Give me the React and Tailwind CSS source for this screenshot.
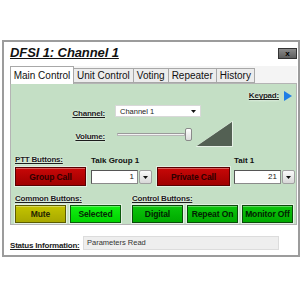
import React from 'react';

const font = { fontFamily: '"Liberation Sans", Arial, sans-serif' };

function Label({ children, className = '' }) {
  return (
    <span
      className={`text-[8px] leading-[8px] font-bold underline text-[#1c1c1c] tracking-[-0.2px] [text-shadow:0_0_2px_#ffffff] ${className}`}
    >
      {children}
    </span>
  );
}

function Btn({ children, tone, w = 'w-[51px]', h = 'h-[18px]' }) {
  const tones = {
    red: 'bg-linear-to-b from-[#c80808] to-[#a00000] border-[#5a0000] text-[#2e0000]',
    olive: 'bg-linear-to-b from-[#c4c400] to-[#a8a800] border-[#5c5c00] text-[#262600]',
    lime: 'bg-linear-to-b from-[#12ee12] to-[#00d400] border-[#0a5a0a] text-[#042804]',
    green: 'bg-linear-to-b from-[#0cc40c] to-[#00aa00] border-[#0a4a0a] text-[#022202]',
  };
  return (
    <div
      className={`${w} ${h} border flex items-center justify-center text-[8.5px] font-bold tracking-[-0.1px] shadow-[inset_0_1px_0_rgba(255,255,255,0.35),0_0_0_1px_rgba(255,255,255,0.5)] ${tones[tone]}`}
    >
      {children}
    </div>
  );
}

function SpinInput({ value }) {
  return (
    <div className="flex items-center h-[14px]">
      <div className="w-[47px] h-[14px] bg-white border border-[#8a8a8a] border-t-[#555] border-l-[#555] flex items-center justify-end pr-[3px] text-[8px] text-[#222]">
        {value}
      </div>
      <div className="ml-[1px] w-[13px] h-[14px] rounded-[2px] border border-[#a0a0a0] bg-linear-to-b from-[#fafafa] to-[#d8d8d8] flex items-center justify-center">
        <svg width="5" height="3" viewBox="0 0 5 3"><path d="M0 0h5L2.5 3z" fill="#111" /></svg>
      </div>
    </div>
  );
}

function VolumeBars() {
  const lines = [];
  for (let i = 1; i < 18; i++) {
    const x = 1 + i * 2;
    lines.push(<line key={i} x1={x} y1="0" x2={x} y2="25" stroke="#a9baa9" strokeWidth="0.7" />);
  }
  return (
    <svg width="37" height="26" viewBox="0 0 37 26">
      <defs>
        <clipPath id="tri"><path d="M1 25L36 1V25Z" /></clipPath>
      </defs>
      <path d="M0.5 25.5L36.5 0.5V25.5Z" fill="none" stroke="#e6f0e6" strokeWidth="1" />
      <path d="M1 25L36 1V25Z" fill="#263026" />
      <g clipPath="url(#tri)">{lines}</g>
    </svg>
  );
}

export default function App() {
  const tabs = ['Unit Control', 'Voting', 'Repeater', 'History'];
  return (
    <div className="w-[300px] h-[300px] bg-white pt-[40px] pl-[2px]" style={font}>
      <div className="w-[298px] h-[217px] border-2 border-[#9c9c9c] flex flex-col">
        {/* title */}
        <div className="h-[25px] flex items-start pl-[6px] pr-[1px]">
          <div className="mt-[3px] text-[13px] leading-[15px] font-bold italic underline tracking-[-0.1px] text-[#111]">
            DFSI 1: Channel 1
          </div>
          <div className="ml-auto mt-[6px] w-[19px] h-[11px] border border-[#333] bg-linear-to-b from-[#8c8c8c] to-[#5e5e5e] flex items-center justify-center text-[8px] leading-[8px] font-bold text-black">
            x
          </div>
        </div>

        {/* tabs */}
        <div className="ml-[6px] mr-[1px] h-[18px] flex items-end bg-[#f4f4f4]">
          <div className="relative z-10 h-[18px] -mb-px w-[64px] bg-white border border-b-0 border-[#a8a8a8] flex items-center justify-center text-[10px] text-[#111]">
            Main Control
          </div>
          {tabs.map((t) => (
            <div
              key={t}
              className="h-[15px] px-[3px] bg-[#ececec] border border-[#a8a8a8] border-l-0 flex items-center text-[10px] text-[#111]"
            >
              {t}
            </div>
          ))}
        </div>

        {/* panel */}
        <div className="ml-[6px] mr-[1px] h-[147px] bg-[#c4dfc5] border border-[#b4b4b4] flex flex-col">
          <div className="mt-[7px] h-[10px] flex items-center justify-end pr-[4px] gap-[5px]">
            <Label>Keypad:</Label>
            <svg width="8" height="10" viewBox="0 0 8 10"><path d="M0 0L8 5L0 10Z" fill="#1f7ee6" /></svg>
          </div>

          <div className="mt-[4px] h-[12px] flex items-center">
            <div className="w-[94px] text-right"><Label>Channel:</Label></div>
            <div className="ml-[10px] w-[86px] h-[12px] bg-white border border-[#d8d8d8] flex items-center pl-[4px] pr-[4px] text-[7.5px] text-[#222]">
              Channel 1
              <svg className="ml-auto" width="5" height="3" viewBox="0 0 5 3"><path d="M0 0h5L2.5 3z" fill="#111" /></svg>
            </div>
          </div>

          <div className="mt-[4px] h-[26px] flex items-center">
            <div className="w-[94px] text-right"><Label>Volume:</Label></div>
            <div className="ml-[12px] w-[76px] h-[14px] flex items-center">
              <div className="w-[68px] h-[3px] border border-[#b8b8b8] border-t-[#9a9a9a] bg-[#f2f2f2]" />
              <div className="w-[7px] h-[13px] rounded-[2px] border border-[#8a8a8a] bg-linear-to-b from-[#ffffff] to-[#dcdcdc]" />
            </div>
            <div className="ml-[3px]"><VolumeBars /></div>
          </div>

          {/* PTT */}
          <div className="mt-[9px] flex items-end pl-[4px]">
            <div className="flex flex-col">
              <Label className="mb-[3px]">PTT Buttons:</Label>
              <Btn tone="red" w="w-[71px]" h="h-[19px]">Group Call</Btn>
            </div>
            <div className="ml-[5px] flex flex-col mb-[2px]">
              <span className="text-[8px] leading-[8px] font-bold text-[#111] mb-[5px]">Talk Group 1</span>
              <SpinInput value="1" />
            </div>
            <div className="ml-[5px] flex flex-col">
              <Btn tone="red" w="w-[73px]" h="h-[19px]">Private Call</Btn>
            </div>
            <div className="ml-[4px] flex flex-col mb-[2px]">
              <span className="text-[8px] leading-[8px] font-bold text-[#111] mb-[5px]">Tait 1</span>
              <SpinInput value="21" />
            </div>
          </div>

          {/* common / control */}
          <div className="mt-[9px] flex pl-[4px]">
            <div className="flex flex-col">
              <Label className="mb-[2px]">Common Buttons:</Label>
              <div className="flex gap-[4px]">
                <Btn tone="olive">Mute</Btn>
                <Btn tone="lime">Selected</Btn>
              </div>
            </div>
            <div className="ml-[11px] flex flex-col">
              <Label className="mb-[2px]">Control Buttons:</Label>
              <div className="flex gap-[4px]">
                <Btn tone="green">Digital</Btn>
                <Btn tone="green">Repeat On</Btn>
                <Btn tone="green">Monitor Off</Btn>
              </div>
            </div>
          </div>
        </div>

        {/* status */}
        <div className="mt-[6px] ml-[6px] flex items-center">
          <div className="w-[73px]"><Label>Status Information:</Label></div>
          <div className="w-[196px] h-[14px] bg-[#eeeeee] border border-[#dcdcdc] flex items-center pl-[3px] text-[7.5px] text-[#333]">
            Parameters Read
          </div>
        </div>
      </div>
    </div>
  );
}
